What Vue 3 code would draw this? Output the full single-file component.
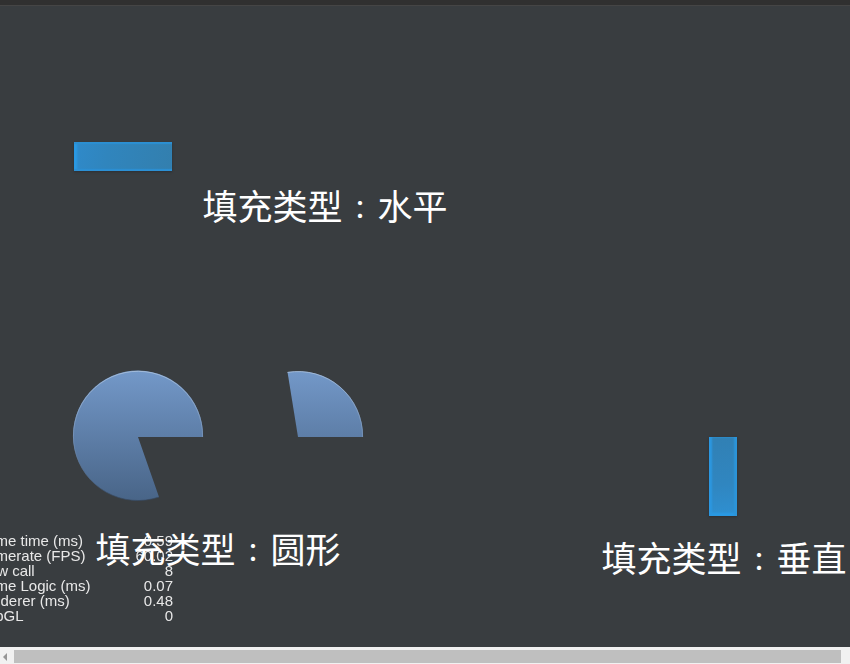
<script setup>
const stats = [
  ['Frame time (ms)', '0.59'],
  ['Framerate (FPS)', '60.02'],
  ['Draw call', '8'],
  ['Frame Logic (ms)', '0.07'],
  ['Renderer (ms)', '0.48'],
  ['WebGL', '0'],
]
</script>

<template>
  <div class="page">
    <div class="topbar"></div>
    <div class="stage">
      <div class="bar bar-h"></div>
      <div class="label label-h">填充类型<span class="colon">：</span>水平</div>

      <svg class="pies" width="320" height="150" viewBox="60 360 320 150">
        <defs>
          <linearGradient id="pieFill" gradientUnits="userSpaceOnUse" x1="0" y1="371" x2="0" y2="502">
            <stop offset="0" stop-color="#7398c8" />
            <stop offset="1" stop-color="#486487" />
          </linearGradient>
          <linearGradient id="pieEdge" gradientUnits="userSpaceOnUse" x1="0" y1="371" x2="0" y2="502">
            <stop offset="0" stop-color="#b4c8e0" />
            <stop offset="0.5" stop-color="#7b98bd" />
            <stop offset="1" stop-color="#33465e" />
          </linearGradient>
        </defs>
        <path d="M138 437 L203 437 A65 65 0 1 0 159 497 Z" fill="url(#pieFill)" />
        <path d="M202.6 437 A64.6 64.6 0 1 0 159 497" fill="none" stroke="url(#pieEdge)" stroke-width="1" stroke-opacity="0.7" />
        <path d="M298 437 L363 437 A65 65 0 0 0 287.5 372 Z" fill="url(#pieFill)" />
        <path d="M362.6 437 A64.6 64.6 0 0 0 287.5 372.4" fill="none" stroke="url(#pieEdge)" stroke-width="1" stroke-opacity="0.7" />
      </svg>

      <div class="stats">
        <div v-for="row in stats" :key="row[0]" class="stat-row">
          <span>{{ row[0] }}</span>
          <span>{{ row[1] }}</span>
        </div>
      </div>
      <div class="label label-c">填充类型<span class="colon">：</span>圆形</div>

      <div class="bar bar-v"></div>
      <div class="label label-v">填充类型<span class="colon">：</span>垂直</div>
    </div>
    <div class="scrollbar">
      <span class="arrow"></span>
      <div class="thumb"></div>
    </div>
  </div>
</template>

<style>
html, body { margin: 0; overflow: hidden; }
</style>

<style scoped>
.page {
  width: 850px;
  height: 664px;
  display: flex;
  flex-direction: column;
  background: #393d40;
  overflow: hidden;
}
.topbar {
  height: 6px;
  background: #303030;
  border-bottom: 1px solid #454545;
  box-sizing: border-box;
  flex: none;
}
.stage {
  position: relative;
  flex: 1;
  overflow: hidden;
}
.bar {
  position: absolute;
  box-sizing: border-box;
  filter: blur(0.4px);
}
.bar-h {
  left: 74px;
  top: 135.5px;
  width: 98px;
  height: 29px;
  background: linear-gradient(100deg, #2f8aca 0%, #3085bd 35%, #337fae 100%);
  box-shadow: inset 0 2px 1px #2c8fd2, inset 0 -2px 1px #2c90d4, inset 3px 0 3px #2a9ce8, 0 1px 2px #2c3034;
}
.bar-v {
  left: 709px;
  top: 431px;
  width: 28px;
  height: 79px;
  background: linear-gradient(175deg, #3180b4 0%, #3086c0 60%, #2e90d2 100%);
  box-shadow: inset 3px 0 2px #2c97e0, inset -3px 0 2px #2c94d8, inset 0 -3px 3px #2a9ce8, 0 1px 2px #2c3034;
}
.label {
  position: absolute;
  color: #fff;
  font-family: "Noto Sans CJK SC", sans-serif;
  font-size: 35px;
  line-height: 40px;
  white-space: nowrap;
}
.colon {
  display: inline-block;
  width: 35px;
  font-family: "Noto Sans CJK KR", sans-serif;
  font-size: 25px;
  font-weight: 500;
  line-height: 1;
  text-align: center;
  transform: translateY(-1px);
}
.label-h { left: 202.5px; top: 179px; }
.label-c { left: 95.5px; top: 522px; }
.label-v { left: 601.5px; top: 531px; }
.pies {
  position: absolute;
  left: 60px;
  top: 354px;
}
.stats {
  position: absolute;
  left: -27px;
  top: 527px;
  width: 200px;
  color: #e8e8e8;
  font-family: "Liberation Sans", Arial, sans-serif;
  font-size: 15px;
  line-height: 15px;
  filter: blur(0.3px);
}
.stat-row {
  display: flex;
  justify-content: space-between;
}
.scrollbar {
  flex: none;
  height: 17px;
  background: #f1f1f1;
  box-sizing: border-box;
  padding: 3px 0 1px;
  display: flex;
  align-items: center;
}
.arrow {
  width: 0;
  height: 0;
  margin-left: 3px;
  border-style: solid;
  border-width: 4px 4px 4px 0;
  border-color: transparent #969696 transparent transparent;
  flex: none;
}
.thumb {
  margin-left: 7px;
  width: 827px;
  height: 13px;
  background: #bfbfbf;
  flex: none;
}
</style>
